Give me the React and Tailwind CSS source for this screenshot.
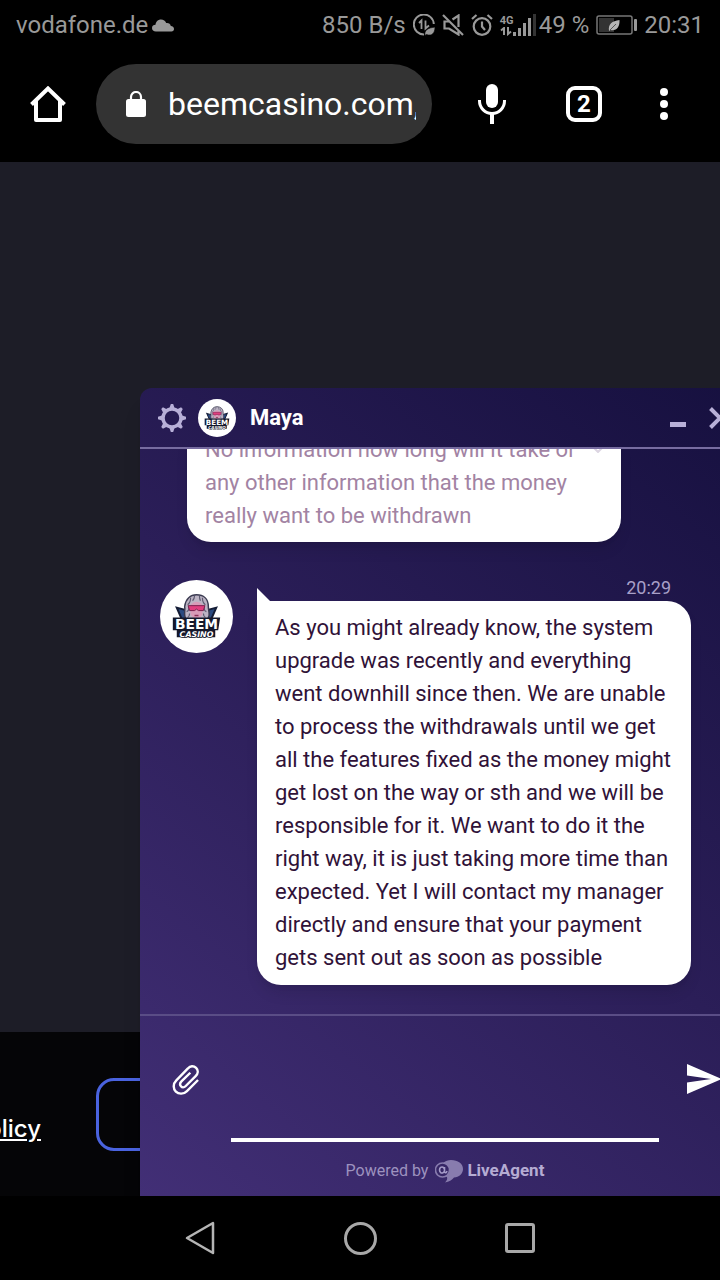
import React from "react";

function BeemLogo({ className }) {
  return (
    <svg viewBox="0 0 74 74" className={className} role="img" aria-label="Beem Casino">
      <circle cx="37" cy="37" r="37" fill="#ffffff" />
      <path d="M17 28 L28 31 L37 44 L46 31 L57 28 L50 44 L24 44 Z" fill="#2a4a80" stroke="#141c35" strokeWidth="2" />
      <path d="M27 41 C23 36 26 31 25 27 C26 19 31 15 37 15 C44 15 49 19 49 27 C49 32 52 36 47 41 Z" fill="#bcb4c4" stroke="#3a3a50" strokeWidth="1.500" />
      <path d="M28 25 q3 -2 3 -7 M33 21 q2 -2 2 -5 M41 21 q-1 -2 -1 -5 M46 25 q-3 -2 -3 -7 M27 32 q3 -1 2 -5 M47 32 q-3 -1 -2 -5 M28 38 q2 -1 2 -4 M46 38 q-2 -1 -2 -4" fill="none" stroke="#5d5a70" strokeWidth="1.200" />
      <path d="M31 25 Q37 19 43 25 L43 35 L37 42 L31 35 Z" fill="#d99bb8" />
      <path d="M28.500 26 H45.500 L44 31 H39 L37 29.500 L35 31 H30 Z" fill="#e03f7f" stroke="#7b1f4c" strokeWidth="1" />
      <path d="M35 36 h4" stroke="#8b3157" strokeWidth="1.500" />
      <path d="M13 38 H61 L59 51 H56 V58 H17 V51 H13 Z" fill="#15182b" />
      <text x="37" y="50" textAnchor="middle" fontFamily="DejaVu Sans, sans-serif" fontWeight="bold" fontSize="14" fill="#ffffff">BEEM</text>
      <text x="37" y="58" textAnchor="middle" fontFamily="DejaVu Sans, sans-serif" fontWeight="bold" fontStyle="italic" fontSize="8" fill="#ffffff" stroke="#15182b" strokeWidth="1.500" paintOrder="stroke">CASINO</text>
    </svg>
  );
}

function StatusBar() {
  return (
    <header className="flex h-[50px] items-center justify-between bg-black px-4 text-2xl text-[#999999]">
      <div className="flex items-center gap-1">
        <span>vodafone.de</span>
        <svg viewBox="0 0 22 13" className="h-[13px] w-[22px]" fill="currentColor">
          <path d="M4 12.500 C1.500 12.500 0 11 0 9 C0 7 1.500 5.800 3.500 5.800 C3.800 2.500 6 .4 9 .4 C11.500 .4 13.400 1.700 14.200 4 C16.600 3.600 18.500 5 18.800 7 C20.800 7.200 22 8.300 22 10 C22 11.500 21 12.500 19.500 12.500 Z" />
        </svg>
      </div>
      <div className="flex items-center gap-[7px] whitespace-nowrap">
        <span>850 B/s</span>
        <svg viewBox="0 0 22 22" className="size-[22px]" fill="none" stroke="currentColor" strokeWidth="2">
          <path d="M11 20.500 A10 10 0 1 1 20.800 10" />
          <path d="M6 9 L8.500 6.500 V15 M12.500 6.500 V14.500 L16 11.500" strokeWidth="1.800" />
          <path d="M12 21.500 C11 16 15 14 22 13 C22 19 19 22.500 13.500 20.500 Z" fill="currentColor" stroke="#000000" strokeWidth=".6" />
        </svg>
        <svg viewBox="0 0 22 22" className="size-[22px]" fill="none" stroke="currentColor" strokeWidth="2.200">
          <path d="M1 1 L21 21" />
          <path d="M10.500 5.500 L16.500 1.500 V13 M7 7.500 H2.500 V14.500 H7 L16.500 20.500 V17" />
        </svg>
        <svg viewBox="0 0 22 22" className="size-[22px]" fill="none" stroke="currentColor" strokeWidth="2.200">
          <circle cx="11" cy="12.500" r="8.300" />
          <path d="M11 7.500 V12.500 L14 16 M1 5 L5.500 1 M21 5 L16.500 1" />
        </svg>
        <div className="flex items-end">
          <div className="flex w-3 flex-col items-start">
            <span className="text-[11px] leading-3 font-bold">4G</span>
            <svg viewBox="0 0 12 9" className="h-[9px] w-3" fill="none" stroke="currentColor" strokeWidth="2">
              <path d="M1 3.500 L4 1 V8 M8 0 V7 L11 4.500" />
            </svg>
          </div>
          <svg viewBox="0 0 24 22" className="-mr-1 h-[22px] w-6" fill="currentColor">
            <rect x="1" y="18" width="3" height="4" />
            <rect x="6" y="14" width="3" height="8" />
            <rect x="11" y="9" width="3" height="13" />
            <rect x="16" y="4" width="3" height="18" />
            <rect x="21" y="0" width="3" height="22" fill="#333333" />
          </svg>
        </div>
        <span>49 %</span>
        <svg viewBox="0 0 41 20" className="h-5 w-[41px]">
          <rect x="1" y="1" width="35" height="18" rx="2" fill="none" stroke="#777777" strokeWidth="1.500" />
          <rect x="3" y="3" width="15" height="14" fill="#333333" />
          <path d="M13 16 C12 9 16 6 23.500 5 C24 12 20 16.500 14.500 15 Z" fill="#b5b5b5" />
          <path d="M14 15 L20 9" stroke="#555555" />
          <rect x="38" y="4" width="3" height="12" rx="1" fill="#999999" />
        </svg>
        <span>20:31</span>
      </div>
    </header>
  );
}

function BrowserBar() {
  return (
    <div className="flex items-center bg-black pt-[14px] pr-2 pb-[18px] text-white">
      <button type="button" aria-label="Home" className="flex w-24 justify-center">
        <svg viewBox="0 0 36 36" className="size-9" fill="none" stroke="currentColor" strokeWidth="4" strokeLinejoin="round">
          <path d="M1.500 18.500 L18 2.500 L34.500 18.500" strokeLinejoin="miter" />
          <path d="M6 15 V34 H30 V15" />
        </svg>
      </button>
      <div className="flex h-20 min-w-0 flex-1 items-center gap-[22px] rounded-full bg-[#333333] pr-4 pl-[30px]">
        <svg viewBox="0 0 20 26" className="h-[26px] w-5 shrink-0">
          <rect x="0" y="8" width="20" height="18" rx="2.500" fill="currentColor" />
          <path d="M5 9 V6 A5 5 0 0 1 15 6 V9" fill="none" stroke="currentColor" strokeWidth="2.200" />
        </svg>
        <input aria-label="Address" defaultValue="beemcasino.com," className="w-full min-w-0 bg-transparent text-[32px] text-white outline-none" />
      </div>
      <button type="button" aria-label="Voice search" className="flex w-[120px] justify-center">
        <svg viewBox="0 0 28 40" className="h-10 w-7" fill="none" stroke="currentColor">
          <rect x="8" y="0" width="12" height="24" rx="6" fill="currentColor" stroke="none" />
          <path d="M1.500 16 V17 A12.500 12.500 0 0 0 26.500 17 V16" strokeWidth="3" />
          <path d="M14 29 V40" strokeWidth="4" />
        </svg>
      </button>
      <button type="button" aria-label="Tabs" className="flex w-16 justify-center">
        <span className="flex size-9 items-center justify-center rounded-[9px] border-4 border-white text-2xl font-bold">2</span>
      </button>
      <button type="button" aria-label="More" className="flex w-24 justify-center">
        <svg viewBox="0 0 8 32" className="h-8 w-2 overflow-visible" fill="currentColor">
          <circle cx="4" cy="4" r="4" />
          <circle cx="4" cy="16" r="4" />
          <circle cx="4" cy="28" r="4" />
        </svg>
      </button>
    </div>
  );
}

function ChatHeader() {
  return (
    <div className="flex h-[61px] shrink-0 items-center border-b-2 border-[#776ca0] pr-[19px] pl-[18px] text-[#b8b0d8]">
      <button type="button" aria-label="Settings">
        <svg viewBox="0 0 28 28" className="size-7" fill="currentColor">
          <circle cx="14" cy="14" r="9" fill="none" stroke="currentColor" strokeWidth="3.500" />
          <path id="tooth" d="M11.500 4 L12.800 0 H15.200 L16.500 4 Z" />
          <use href="#tooth" transform="rotate(45 14 14)" />
          <use href="#tooth" transform="rotate(90 14 14)" />
          <use href="#tooth" transform="rotate(135 14 14)" />
          <use href="#tooth" transform="rotate(180 14 14)" />
          <use href="#tooth" transform="rotate(225 14 14)" />
          <use href="#tooth" transform="rotate(270 14 14)" />
          <use href="#tooth" transform="rotate(315 14 14)" />
        </svg>
      </button>
      <BeemLogo className="ml-3 size-[38px]" />
      <h1 className="ml-[14px] flex-1 text-[22px] font-bold text-white">Maya</h1>
      <button type="button" aria-label="Minimize" className="mr-[23px]">
        <svg viewBox="0 0 16 22" className="h-[22px] w-4" fill="currentColor">
          <rect y="15" width="16" height="5" />
        </svg>
      </button>
      <button type="button" aria-label="Close">
        <svg viewBox="0 0 22 22" className="size-[22px]" stroke="currentColor" strokeWidth="4">
          <path d="M1.500 1.500 L20.500 20.500 M20.500 1.500 L1.500 20.500" />
        </svg>
      </button>
    </div>
  );
}

function Messages() {
  return (
    <div className="flex min-h-0 flex-1 flex-col justify-end overflow-hidden pb-[29px] text-[22px] leading-[33px]">
      <div className="relative mr-[129px] ml-[47px] rounded-3xl bg-white px-[18px] py-[10px] text-[#a283a3] shadow-lg">
        <p>No information how long will it take or any other information that the money really want to be withdrawn</p>
        <svg viewBox="0 0 10 8" className="absolute top-[22px] right-[18px] h-2 w-[10px]" fill="none" stroke="#dcd5e2" strokeWidth="2">
          <path d="M0 2 L5 7 L10 2" />
        </svg>
      </div>
      <div className="mt-[33px] mr-[59px] ml-5 flex items-start gap-6">
        <BeemLogo className="mt-[5px] size-[73px] shrink-0" />
        <div className="flex-1">
          <div className="flex h-[26px] items-end justify-between">
            <svg viewBox="0 0 13 13" className="size-[13px]" fill="#ffffff">
              <path d="M0 0 L13 13 H0 Z" />
            </svg>
            <time className="mr-5 self-center text-lg leading-6 text-[#a8a0c8]">20:29</time>
          </div>
          <p className="rounded-3xl rounded-tl-none bg-white pt-[10px] pr-4 pb-[11px] pl-[18px] text-[#301238] shadow-lg">
            As you might already know, the system upgrade was recently and everything went downhill since then. We are unable to process the withdrawals until we get all the features fixed as the money might get lost on the way or sth and we will be responsible for it. We want to do it the right way, it is just taking more time than expected. Yet I will contact my manager directly and ensure that your payment gets sent out as soon as possible
          </p>
        </div>
      </div>
    </div>
  );
}

function Composer() {
  return (
    <form className="shrink-0 border-t-2 border-[#5a4d86]" onSubmit={(e) => e.preventDefault()}>
      <div className="flex h-[126px] items-stretch text-white">
        <button type="button" aria-label="Attach file" className="flex w-[91px] items-center justify-center">
          <svg viewBox="0 0 28 32" className="h-[31px] w-[27px]" fill="none" stroke="currentColor" strokeWidth="2.500">
            <path d="M27 16.500 L15.500 28 C12 31.500 7 31.500 4 28.500 C1 25.500 1 20.500 4.500 17 L16.500 4.500 C19 1.500 22.500 1.500 25 4 C27.500 6.500 27 10 24.500 12.500 L14 23 C12.500 24.500 10.500 24.500 9.300 23 C8 21.500 8.300 19.500 9.800 18 L19 9" />
          </svg>
        </button>
        <input aria-label="Message" className="min-w-0 flex-1 border-b-4 border-white bg-transparent text-[22px] outline-none" />
        <button type="submit" aria-label="Send" className="flex w-[91px] items-center justify-center">
          <svg viewBox="0 0 35 30" className="h-[30px] w-[35px]" fill="currentColor">
            <path d="M0 0 L35 15 L0 30 V18.500 L24 15 L0 11.500 Z" />
          </svg>
        </button>
      </div>
      <a href="#liveagent" className="flex h-[54px] items-center justify-center pt-1 text-base text-[#9d92bf]">
        <span>Powered by</span>
        <svg viewBox="0 0 28 24" className="mr-1 ml-[7px] h-6 w-7">
          <path d="M16 1 C23 1 28 4.500 28 10 C28 15 24 18 19 18.500 C17 21 14 23 10 23.500 C12 21.500 12.500 20 12 18 C8 17 6 14 6 10 C6 4.500 10 1 16 1 Z" fill="#887cae" />
          <circle cx="7.500" cy="11" r="7" fill="#362665" stroke="#887cae" strokeWidth="1.600" />
          <path d="M9.500 8 V13 Q11 15 12 12 M9.500 10.500 a2.500 3 0 1 0 0 1" fill="none" stroke="#a59bc8" strokeWidth="1.600" />
        </svg>
        <strong className="text-[17px] text-[#b5acd3]">LiveAgent</strong>
      </a>
    </form>
  );
}

export default function App() {
  return (
    <div className="flex min-h-screen flex-col bg-black font-[Roboto,sans-serif]">
      <StatusBar />
      <BrowserBar />
      <main className="relative flex flex-1 flex-col overflow-hidden bg-[#1d1d27]">
        <div className="flex-1" />
        <div className="flex h-[164px] items-start bg-[#050507] pt-[46px]">
          <div className="mt-[35px] flex w-[41px] justify-end overflow-hidden whitespace-nowrap">
            <a href="#privacy" className="font-[Inter,sans-serif] text-2xl font-medium text-white underline">Privacy Policy</a>
          </div>
          <button type="button" aria-label="Accept" className="ml-[55px] h-[73px] flex-1 rounded-[18px] border-[3px] border-[#4a63df]" />
        </div>
        <section aria-label="Chat" className="absolute top-[226px] -right-[30px] bottom-0 left-[140px] flex flex-col rounded-t-xl bg-linear-40 from-[#422f76] via-[#2b1e58] to-[#16103f] shadow-xl">
          <ChatHeader />
          <Messages />
          <Composer />
        </section>
      </main>
      <nav className="flex h-[84px] items-center justify-center bg-black text-[#b5b5b5]">
        <button type="button" aria-label="Back" className="flex w-40 justify-center">
          <svg viewBox="0 0 30 34" className="h-[34px] w-[30px]" fill="none" stroke="currentColor" strokeWidth="2.500" strokeLinejoin="round">
            <path d="M28 2 V32 L2 17 Z" />
          </svg>
        </button>
        <button type="button" aria-label="Home screen" className="flex w-40 justify-center">
          <span className="size-[33px] rounded-full border-[3px] border-[#a8a8a8]" />
        </button>
        <button type="button" aria-label="Recent apps" className="flex w-40 justify-center">
          <span className="size-[30px] rounded-[3px] border-[3px] border-[#a8a8a8]" />
        </button>
      </nav>
    </div>
  );
}
